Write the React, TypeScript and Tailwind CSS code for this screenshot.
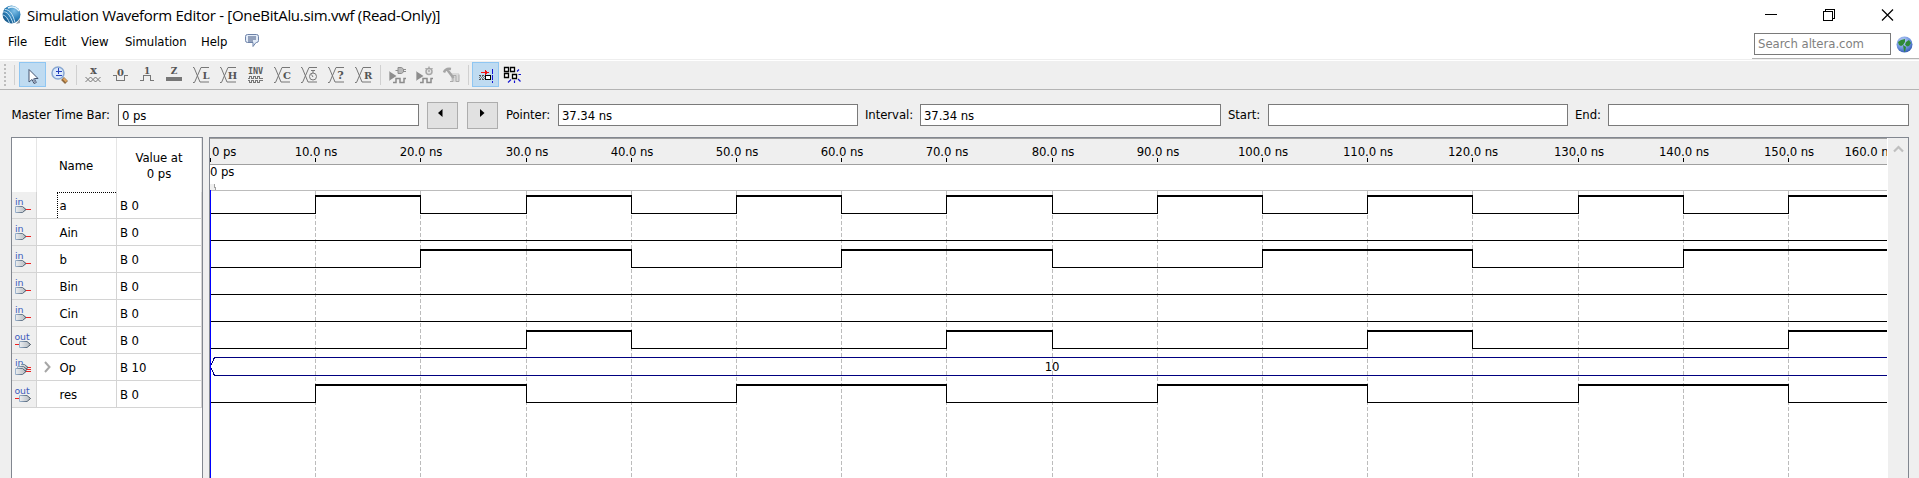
import type { ReactNode } from "react";

const G = "#777777";

function Tool({ children, active = false }: { children: ReactNode; active?: boolean }) {
  return (
    <button className={active ? "h-[25px] w-[27px] bg-[#bfdbf1] outline outline-1 -outline-offset-1 outline-[#8fc6f2]" : "h-[25px] w-[27px]"}>
      <svg width="27" height="25" viewBox="0 0 27 25" fill="none">{children}</svg>
    </button>
  );
}

function Divider() {
  return <div className="mt-[3px] h-5 w-px shrink-0 bg-[#d0d0d0]" />;
}

function Glyph({ x, y, t, size = 11 }: { x: number; y: number; t: string; size?: number }) {
  return (
    <text x={x} y={y} fontSize={size} textAnchor="middle" fontWeight="bold" fill="#555555" fontFamily="'DejaVu Serif', serif">{t}</text>
  );
}

function BusTool({ children }: { children: ReactNode }) {
  return (
    <Tool>
      <path d="M5 5.500h1l6 14.500h9M21 5.500h-8L6.500 20.500H5" stroke={G} />
      <path d="M14 8h8v10h-8z" fill="#efefef" />
      {children}
    </Tool>
  );
}

function SimWave() {
  return (
    <>
      <path d="M5.500 9.500v9l7-4.500z" fill="#8d8d8d" />
      <path d="M5.500 9.500v9" stroke="#b0b0b0" />
      <path d="M9 20.500h3v-4h4v4h4v-4h2" stroke="#8c8c8c" strokeWidth="1.500" />
    </>
  );
}

function ToolBar() {
  return (
    <div className="flex h-7 shrink-0 items-start bg-[#efefef] pl-1 pt-px font-stretch-normal">
      <svg width="3" height="24" className="mr-2 mt-px">
        {[1, 5, 9, 13, 17, 21].map((y) => <rect key={y} width="2" height="2" y={y} fill="#bdbdbd" />)}
      </svg>
      <div className="-ml-px mr-px"><Divider /></div>
      <div className="ml-[3px] mr-[3px] flex">
        <Tool active>
          <path d="M10 7.500v12.500l3-2.500 2 4 2.300-1-2-4h3.700z" fill="#fff" stroke="#44536e" />
          <path d="M13.500 17l1.800 4 1.800-.800-2-4z" fill="#8a98b0" />
        </Tool>
        <Tool>
          <path d="M16.500 16.500l4 4" stroke="#8e6a40" strokeWidth="4" />
          <path d="M17.500 16.500l3 3" stroke="#e2a55e" strokeWidth="2" />
          <circle cx="12" cy="11" r="6" fill="#dbe9fb" stroke="#8aa9d2" strokeWidth="1.500" />
          <path d="M12.500 6v6M9.500 9.500h6M9.500 13.500h6" stroke="#2340bb" shapeRendering="crispEdges" />
        </Tool>
      </div>
      <Divider />
      <div className="ml-[3px] mr-[3px] flex">
        <Tool>
          <Glyph x={13.5} y={12} t="x" size={11} />
          <path d="M5.500 20l5-5 5 5 5-5M5.500 15l5 5 5-5 5 5" stroke={G} />
        </Tool>
        <Tool>
          <Glyph x={13.500} y={14} t="0" size={10} />
          <path d="M6 13.500h3.500v5h8v-5H21" stroke={G} shapeRendering="crispEdges" />
        </Tool>
        <Tool>
          <Glyph x={13} y={12} t="1" size={9} />
          <path d="M6 18.500h3.500v-5h7v5H20" stroke={G} shapeRendering="crispEdges" />
        </Tool>
        <Tool>
          <Glyph x={13} y={12} t="Z" size={9} />
          <path d="M5 15h16v4H5z" fill={G} />
        </Tool>
        <BusTool><Glyph x={18} y={17} t="L" size={10} /></BusTool>
        <BusTool><Glyph x={17.500} y={17} t="H" size={10} /></BusTool>
        <Tool>
          <text x="6" y="12" textLength="15" lengthAdjust="spacingAndGlyphs" fontSize="8" fontWeight="bold" fill="#5c5c5c" fontFamily="'DejaVu Sans Mono', monospace">INV</text>
          <path d="M6 16.500h1.500v-2h2v2h2v-2h2v2h2v-2h2v2h3M6 18.500h1.500v2h2v-2h2v2h2v-2h2v2h2v-2h3" stroke={G} shapeRendering="crispEdges" />
        </Tool>
        <BusTool><Glyph x={18} y={17} t="C" size={10} /></BusTool>
        <BusTool>
          <circle cx="17" cy="14.500" r="3.500" stroke={G} />
          <path d="M17 8v3M15 8.500h4M17 15l-1.500-2.500" stroke={G} />
        </BusTool>
        <BusTool><Glyph x={17.500} y={17} t="?" size={11} /></BusTool>
        <BusTool><Glyph x={18} y={17} t="R" size={10} /></BusTool>
      </div>
      <Divider />
      <div className="ml-[3px] mr-[3px] flex">
        <Tool>
          <SimWave />
          <path d="M14 5.500h3.500l2 1.500v3l-2 1.500H14zM11.500 8.500H14M20 7.500h2M20 9.500h2" fill="#b9b9b9" stroke="#8d8d8d" />
        </Tool>
        <Tool>
          <SimWave />
          <circle cx="18" cy="9.500" r="3" fill="#e4e4e4" stroke="#a8a8a8" strokeWidth="1.500" />
          <path d="M18 8v2M18 4.500v2M14.500 6l1 1M21.500 6l-1 1" stroke="#8d8d8d" />
        </Tool>
        <Tool>
          <path d="M13 11h8v9h-8z" fill="#dadada" />
          <path d="M6 10.500c1-3 4-4 7-3.500M9.500 8l6 8" stroke="#a5a5a5" strokeWidth="2.500" />
          <path d="M12 19.500h3v-6h3v6h3v-7" stroke="#ababab" />
        </Tool>
      </div>
      <Divider />
      <div className="ml-[3px] flex">
        <Tool active>
          <g shapeRendering="crispEdges">
            <path d="M9 10.500h5" stroke="#e11" />
            <path d="M13 8v5l4-2.500z" fill="#e11" />
            <path d="M7 13.500h6M7 17.500h6" stroke="#555" strokeDasharray="2 1" />
            <path d="M8 14.500h5M7 15.500h5M8 16.500h5" stroke="#777" strokeDasharray="1 1" />
            <path d="M13.500 13.500h5v4h-5z" stroke="#000" fill="#fff" />
            <path d="M20.500 7v14" stroke="#1414d2" strokeDasharray="5 1" />
          </g>
        </Tool>
        <Tool>
          <path d="M5.500 5.500h4v4h-4zM11.500 5.500h4v4h-4zM5.500 11.500h4v4h-4zM13.500 12.500h4v4h-4z" stroke="#000" fill="#fff" strokeWidth="1.300" />
          <path d="M18 9.500l2-2M19.500 12.500h2.500M19 17l2.500 2.500M15.500 18.500V21M12 17.500l-3 3" stroke="#1414d2" strokeWidth="1.200" />
        </Tool>
      </div>
    </div>
  );
}

function TitleBar() {
  return (
    <header className="flex h-6 shrink-0 items-center bg-white pr-[25px] pt-[5px]">
      <svg width="20" height="20" viewBox="0 0 20 20" className="ml-[2px] shrink-0">
        <defs>
          <radialGradient id="orb" cx=".65" cy=".3" r=".8">
            <stop offset="0" stopColor="#7fc0e8" />
            <stop offset=".55" stopColor="#2b7fb8" />
            <stop offset="1" stopColor="#125080" />
          </radialGradient>
        </defs>
        <circle cx="9.500" cy="9.500" r="9" fill="url(#orb)" />
        <path d="M1 7c4-1 7 3 10 11M3 4.500c5 0 8 5 10 13M0 10c4 0 6 4 8 9" stroke="#c4e0f2" fill="none" />
        <path d="M6 3c4-2 8-1 11 3" stroke="#dff1fb" strokeWidth="1.500" fill="none" />
        <path d="M14 19l4-5v4z" fill="#8b98a3" />
      </svg>
      <h1 className="ml-[5px] whitespace-nowrap font-['Open_Sans',sans-serif] text-[15px] leading-5 tracking-[-0.3px] font-stretch-normal">
        Simulation Waveform Editor - [OneBitAlu.sim.vwf (Read-Only)]
      </h1>
      <svg width="130" height="14" viewBox="0 0 130 14" className="ml-auto shrink-0" fill="none" stroke="#000">
        <path d="M1 6.500h12M59.500 3.500h9v9h-9zM61.500 3v-1.500h9v9H69" shapeRendering="crispEdges" />
        <path d="M118 1.500l11 11M129 1.500l-11 11" strokeWidth="1.200" />
      </svg>
    </header>
  );
}

function MenuBar() {
  return (
    <nav className="flex h-[35px] shrink-0 bg-white pl-2">
      <div className="flex h-9 pt-[9px] leading-[18px]">
        <span className="w-9">File</span>
        <span className="w-[37px]">Edit</span>
        <span className="w-11">View</span>
        <span className="w-[76px]">Simulation</span>
        <span className="w-11">Help</span>
        <svg width="15" height="14" viewBox="0 0 15 14" className="mt-px">
          <path d="M2.500.500h9q2 0 2 2v4q0 2-2 2h-.500l-3 4v-4H2.500q-2 0-2-2v-4q0-2 2-2z" fill="#e3ecf8" stroke="#6d82a8" />
          <path d="M3 3h8M3 5h8M3 7h5" stroke="#2f4672" strokeWidth=".9" />
        </svg>
      </div>
      <div className="ml-auto flex h-[35px] w-[167px] items-center gap-[5px] border-b border-[#b4b4b4] pb-[2px] pl-[2px] pt-[8px]">
        <div className="flex h-[22px] w-[137px] items-center border border-[#7a7a7a] pl-[3px] tracking-[-0.05px] text-[#7f7f7f]">Search altera.com</div>
        <svg width="17" height="17" viewBox="0 0 17 17">
          <defs>
            <radialGradient id="sea" cx=".4" cy=".3" r=".75">
              <stop offset="0" stopColor="#c3d6fa" />
              <stop offset=".6" stopColor="#6d93de" />
              <stop offset="1" stopColor="#2d55ac" />
            </radialGradient>
          </defs>
          <circle cx="8.500" cy="8.500" r="8" fill="url(#sea)" />
          <path d="M2 6l3-2 4-1v3l-2 3-2 1-2-1zM10 6l3-2 2 3-2 3-2 .500-2-2zM7 9l3 2-1 5-1-1z" fill="#2f8a35" />
        </svg>
      </div>
    </nav>
  );
}

function Field({ className, children }: { className: string; children?: ReactNode }) {
  return <div className={`h-[22px] shrink-0 border border-[#7a7a7a] bg-white pl-[3px] leading-[21px] ${className}`}>{children}</div>;
}

function TimeBar() {
  return (
    <div className="flex h-[47px] shrink-0 items-center whitespace-nowrap pl-[11.500px] pt-[3px]">
      <span className="w-[106.500px] shrink-0">Master Time Bar:</span>
      <Field className="w-[301px]">0 ps</Field>
      <button className="ml-2 flex h-[27px] w-[31px] items-center justify-center border border-[#adadad] bg-[#e1e1e1]">
        <svg width="5" height="8" className="-ml-1 -mt-1"><path d="M4.500 0v8L0 4z" /></svg>
      </button>
      <button className="ml-[9px] flex h-[27px] w-[31px] items-center justify-center border border-[#adadad] bg-[#e1e1e1]">
        <svg width="5" height="8" className="-mt-1"><path d="M0 0v8l4.500-4z" /></svg>
      </button>
      <span className="ml-2 w-[52px] shrink-0">Pointer:</span>
      <Field className="w-[300px]">37.34 ns</Field>
      <span className="ml-[7px] w-[55px] shrink-0">Interval:</span>
      <Field className="w-[301px]">37.34 ns</Field>
      <span className="ml-[7px] w-10 shrink-0">Start:</span>
      <Field className="w-[300px]" />
      <span className="ml-[7px] w-[33px] shrink-0">End:</span>
      <Field className="w-[301px]" />
    </div>
  );
}

type Kind = "in" | "out" | "bus";
type Signal = { name: string; value: string; kind: Kind; edges: number[] };

const signals: Signal[] = [
  { name: "a", value: "B 0", kind: "in", edges: [1, 2, 3, 4, 5, 6, 7, 8, 9, 10, 11, 12, 13, 14, 15] },
  { name: "Ain", value: "B 0", kind: "in", edges: [] },
  { name: "b", value: "B 0", kind: "in", edges: [2, 4, 6, 8, 10, 12, 14] },
  { name: "Bin", value: "B 0", kind: "in", edges: [] },
  { name: "Cin", value: "B 0", kind: "in", edges: [] },
  { name: "Cout", value: "B 0", kind: "out", edges: [3, 4, 7, 8, 11, 12, 15] },
  { name: "Op", value: "B 10", kind: "bus", edges: [] },
  { name: "res", value: "B 0", kind: "out", edges: [1, 3, 5, 7, 9, 11, 13, 15] },
];

function PinIcon({ kind }: { kind: Kind }) {
  const label = kind === "out" ? "out" : "in";
  return (
    <svg width="24" height="26" viewBox="0 0 24 26" fill="none">
      <defs>
        <linearGradient id="pin" x1="0" x2="1" y1="0" y2="0">
          <stop offset="0" stopColor="#eceef0" />
          <stop offset="1" stopColor="#b4bac0" />
        </linearGradient>
        <linearGradient id="rim" x1="0" x2="1" y1="0" y2="0">
          <stop offset="0" stopColor="#9db4d0" />
          <stop offset="1" stopColor="#3d4c5a" />
        </linearGradient>
      </defs>
      <text x={kind === "out" ? 2.500 : 3} y={kind === "bus" ? 11.5 : 12.500} fontSize="9" fill="#3c5cbc" textLength={kind === "out" ? 15 : 8.500} lengthAdjust="spacingAndGlyphs" fontFamily="'DejaVu Sans', sans-serif">{label}</text>
      {kind === "in" && (
        <>
          <path d="M14 17.500h5" stroke="#ee2222" shapeRendering="crispEdges" />
          <path d="M3.500 14.500h7l3.500 3-3.500 3h-7z" fill="url(#pin)" stroke="url(#rim)" />
        </>
      )}
      {kind === "out" && (
        <>
          <path d="M3 17.500h4" stroke="#ee2222" shapeRendering="crispEdges" />
          <path d="M7.500 14.500h7.500l3.500 3-3.500 3H7.500z" fill="url(#pin)" stroke="url(#rim)" />
        </>
      )}
      {kind === "bus" && (
        <>
          <path d="M14 13.500h5M14 15.500h5M14 17.500h5" stroke="#ee2222" shapeRendering="crispEdges" />
          <path d="M9 10.500h3.500l3.500 3-3.500 3h-5" fill="url(#pin)" stroke="url(#rim)" />
          <path d="M5.500 12.500h6l3.500 3-3.500 3h-6z" fill="url(#pin)" stroke="url(#rim)" />
          <path d="M3.500 14.500h7l3.500 3-3.500 3h-7z" fill="url(#pin)" stroke="url(#rim)" />
        </>
      )}
    </svg>
  );
}

function SignalTable() {
  return (
    <section className="flex w-[192px] shrink-0 flex-col border border-b-0 border-[#828790] bg-white">
      <div className="flex h-[54px] text-center">
        <div className="w-[25px] border-r border-[#e5e5e5]" />
        <div className="w-20 border-r border-[#e5e5e5] pr-[1px] pt-[19px] leading-[18px]">Name</div>
        <div className="w-[85px] border-r border-[#e5e5e5] pt-[12px] leading-4">Value at<br />0 ps</div>
      </div>
      {signals.map((s, i) => (
        <div key={s.name} className="flex h-[27px] w-[190px] border-b border-[#d4d4d4] leading-[27px]">
          <div className="w-[25px] border-r border-[#d4d4d4] bg-[#efefef]"><PinIcon kind={s.kind} /></div>
          <div className="flex w-20 border-r border-[#d4d4d4]">
            <div className="flex w-5 items-center justify-end">
              {s.kind === "bus" && (
                <svg width="7" height="12" viewBox="0 0 7 12" className="mr-[6px]" fill="none"><path d="M1 1l4.500 5L1 11" stroke="#a6a6a6" strokeWidth="2" /></svg>
              )}
            </div>
            <div className={i === 0 ? "grow border-l border-t border-dotted border-black pl-[1.500px] leading-[25px]" : "grow pl-[2.500px]"}>{s.name}</div>
          </div>
          <div className="w-[85px] border-r border-[#d4d4d4] pl-[3px]">{s.value}</div>
        </div>
      ))}
    </section>
  );
}

const WIDTH = 1677;
const tickX = (n: number) => Math.round(n * 105.2);

function levelPaths(edges: number[], low: number) {
  let high = false;
  let x = 0;
  let thin = "";
  let thick = "";
  [...edges.map(tickX), WIDTH].forEach((next, i) => {
    if (high) thick += `M${x} ${low - 17}H${i === edges.length ? next : next + 1}`;
    else thin += `M${x} ${low + 0.5}H${next}`;
    if (i < edges.length) thin += `M${next + 0.5} ${low - 18}V${low + 1}`;
    high = !high;
    x = next;
  });
  return { thin, thick };
}

function WaveCanvas() {
  const ticks = Array.from({ length: 17 }, (_, i) => i);
  return (
    <svg width={WIDTH} height="340" viewBox={`0 0 ${WIDTH} 340`} className="shrink-0 bg-white" shapeRendering="crispEdges">
      <rect width={WIDTH} height="26" fill="#efefef" />
      <path d={`M0 .5H${WIDTH}M0 26.5H${WIDTH}`} stroke="#a0a0a0" />
      <path d={`M0 52.500H${WIDTH}`} stroke="#bcbcbc" />
      {ticks.map((n) => (
        <g key={n}>
          <path d={`M${tickX(n) + 0.5} 20v4`} stroke="#000" />
          {n > 0 && <path d={`M${tickX(n) + 0.5} 53V340`} stroke="#bcbcbc" strokeDasharray="4 2" />}
          <text x={n === 0 ? 2 : n === 16 ? 1634.5 : tickX(n) + 1} y="18" textAnchor={n === 0 || n === 16 ? "start" : "middle"}>
            {n === 0 ? "0 ps" : `${n * 10}.0 ns`}
          </text>
        </g>
      ))}
      <text x="0" y="38">0 ps</text>
      <path d="M0 46h4v3l1 1v2H0z" fill="#efefef" />
      <path d="M4.500 46v4M5.500 49v3" stroke="#a0a0a0" />
      {signals.map((s, i) => {
        const low = 75 + i * 27;
        if (s.kind === "bus") {
          return (
            <g key={s.name}>
              <path d={`M${WIDTH} ${low - 17.500}H4.500L.5 ${low - 8.500}L4.500 ${low + 0.5}H${WIDTH}`} fill="none" stroke="#000080" />
              <text x="842" y={low - 4} textAnchor="middle">10</text>
            </g>
          );
        }
        const { thin, thick } = levelPaths(s.edges, low);
        return (
          <g key={s.name} stroke="#000" fill="none">
            <path d={thin} />
            <path d={thick} strokeWidth="2" />
          </g>
        );
      })}
      <path d="M.5 52V340" stroke="#0000ff" />
    </svg>
  );
}

export default function App() {
  return (
    <div className="flex h-[478px] w-[1919px] flex-col overflow-hidden bg-[#efefef] font-['DejaVu_Sans',sans-serif] text-[13px] text-black font-stretch-condensed tracking-[-0.08px]">
      <TitleBar />
      <MenuBar />
      <div className="h-[2px] shrink-0 border-t border-[#eeeeee] bg-white" />
      <ToolBar />
      <div className="h-px shrink-0 bg-[#b4b4b4]" />
      <TimeBar />
      <main className="flex h-[341px] shrink-0 gap-[6px] pl-[11px]">
        <SignalTable />
        <section className="flex w-[1700px] border border-b-0 border-[#828790]">
          <WaveCanvas />
          <div className="flex grow justify-center border-l border-white pt-[7px]">
            <svg width="11" height="8" viewBox="0 0 11 8" fill="none"><path d="M1 6.500l4.500-4.500L10 6.500" stroke="#bfbfbf" strokeWidth="2.200" /></svg>
          </div>
        </section>
      </main>
    </div>
  );
}
